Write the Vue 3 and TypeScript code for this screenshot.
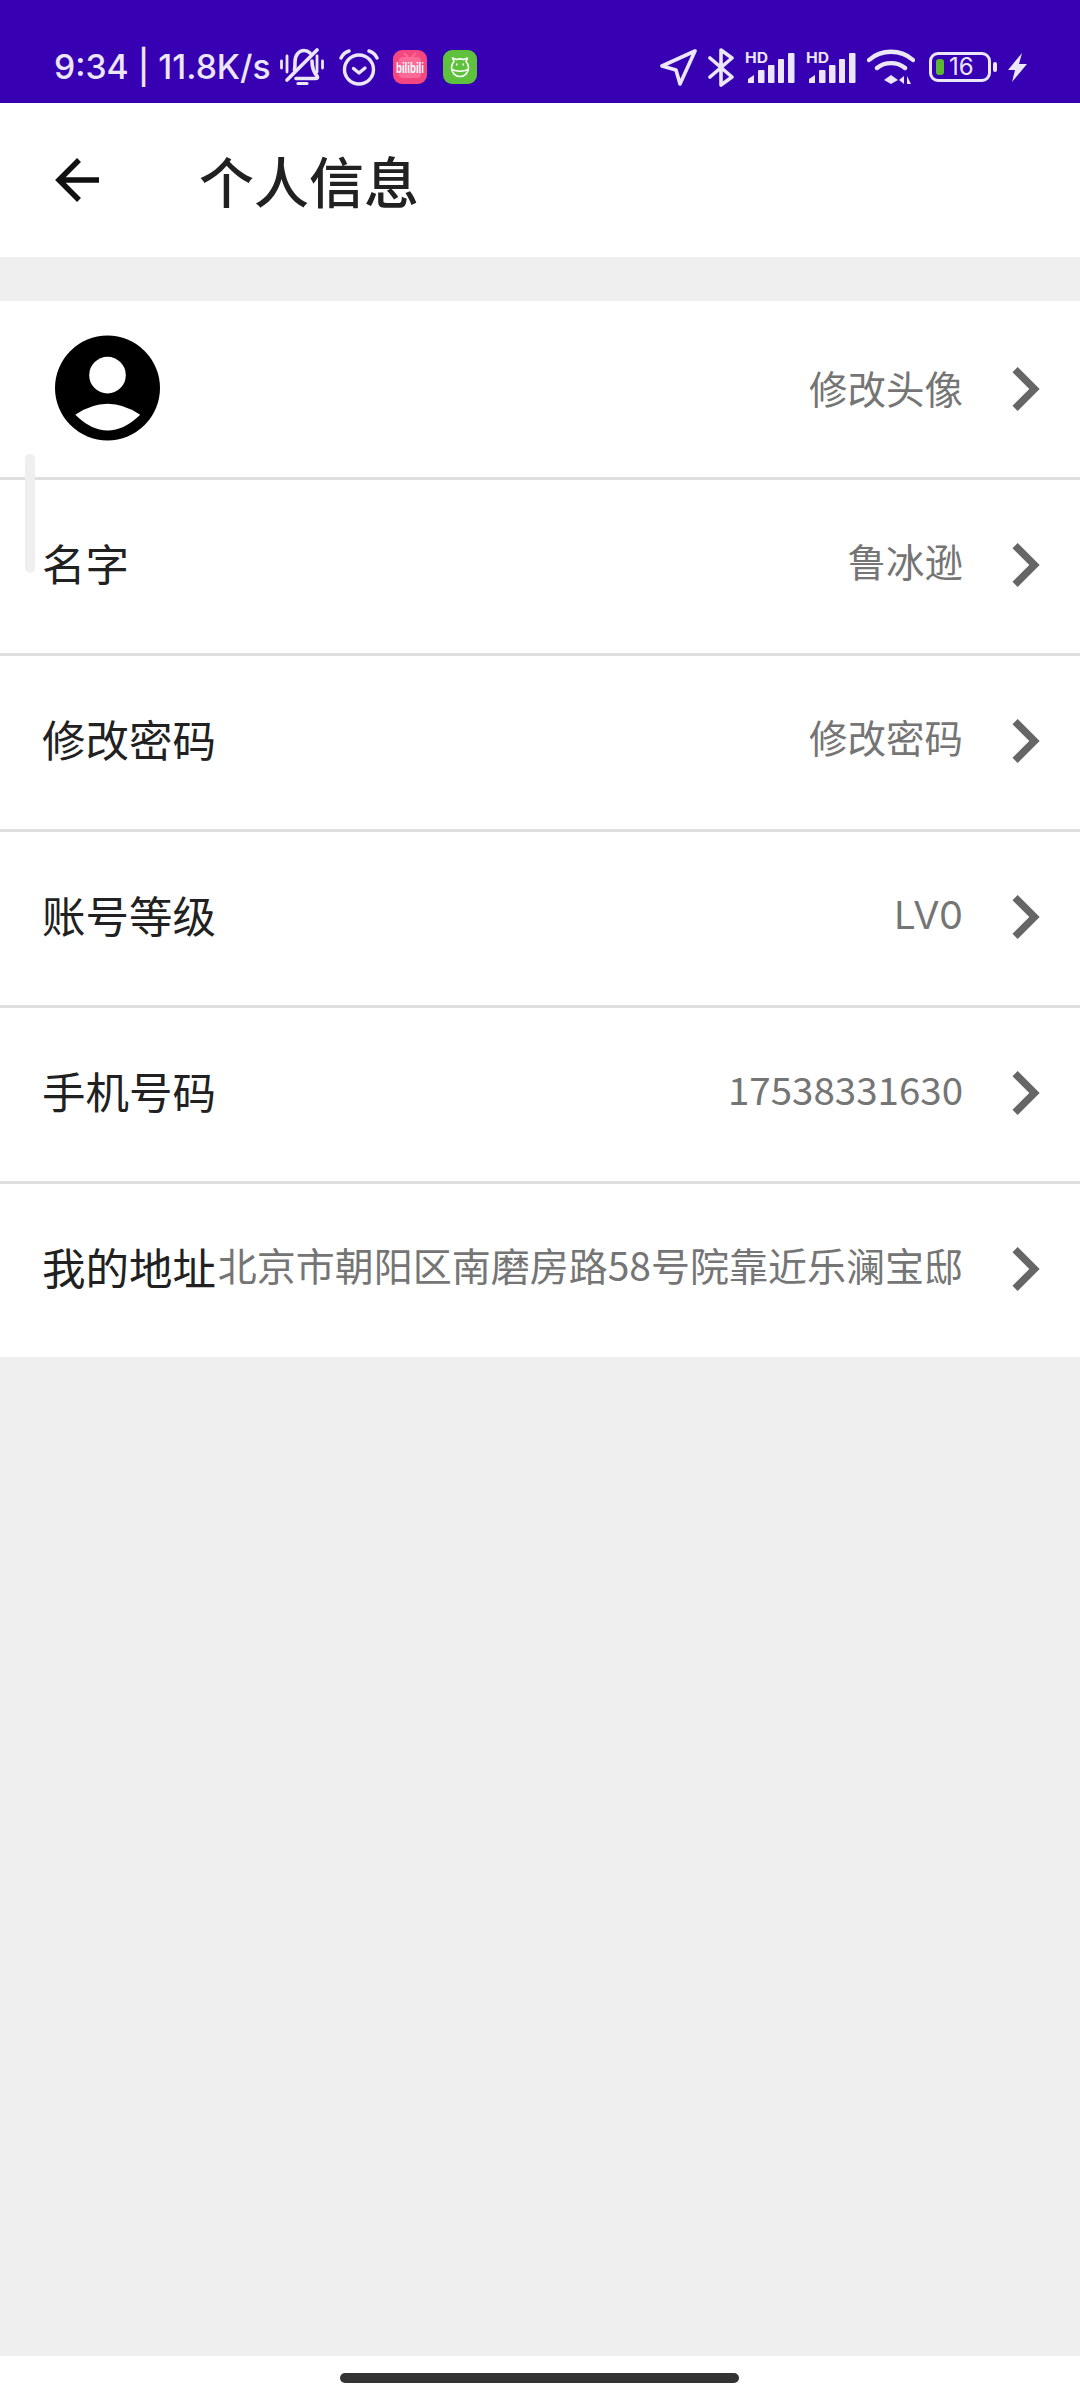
<script setup lang="ts">
interface Row {
  label: string
  value: string
  latin?: boolean
}

const rows: Row[] = [
  { label: '名字', value: '鲁冰逊' },
  { label: '修改密码', value: '修改密码' },
  { label: '账号等级', value: 'LV0', latin: true },
  { label: '手机号码', value: '17538331630' },
  { label: '我的地址', value: '北京市朝阳区南磨房路58号院靠近乐澜宝邸' },
]
const bars = [0, 1]
</script>

<template>
  <main class="page">
    <header class="status">
      <div class="status-left">
        <span class="clock">9:34 | 11.8K/s</span>
        <svg class="ic bell" width="44" height="38" viewBox="0 0 44 38" fill="none" stroke="#ebe6f8" stroke-width="3.6" stroke-linecap="round" stroke-linejoin="round">
          <path d="M1.500 13v7M7 8v16M37 8v16M42.500 13v7" stroke-width="2.800" />
          <path d="M14.500 22c.5-3 .5-5 .5-8 0-7 4-11.500 9-11.500 2.500 0 4.500 1 6 2.500M32 13c0 6 1.500 11 5 15 1 1.500.5 2.500-1 2.500H16" />
          <path d="M7 32 37 2" />
          <path d="M18 35.500h9" stroke-width="3.200" />
        </svg>
        <svg class="ic alarm" width="40" height="37" viewBox="0 0 40 37" fill="none" stroke="#ebe6f8" stroke-width="3.400" stroke-linecap="round" stroke-linejoin="round">
          <circle cx="20" cy="20.500" r="14.500" />
          <path d="M14.500 19.500l5.500 4.500 6-5" />
          <path d="M2 9C3.500 5.500 6.500 3 10 2M38 9C36.500 5.500 33.500 3 30 2" />
        </svg>
        <svg class="ic app" width="34" height="34" viewBox="0 0 34 34">
          <rect width="34" height="34" rx="9" fill="#f5477f" />
          <rect x="6" y="7" width="22" height="21" rx="4" fill="#fb6b97" />
          <path d="M11 3l4 4M23 3l-4 4" stroke="#fb6b97" stroke-width="2" />
          <text x="17" y="23" class="bili" text-anchor="middle" textLength="28" lengthAdjust="spacingAndGlyphs">bilibili</text>
        </svg>
        <svg class="ic" width="34" height="34" viewBox="0 0 34 34" fill="none">
          <rect width="34" height="34" rx="9" fill="#5ec23c" />
          <path d="M11 11.500 9.500 8l4 1.500c2.300-.8 4.700-.8 7 0l4-1.500-1.500 3.500c1.500 1.500 2.500 3.500 2.500 6 0 5.500-4 9-8.500 9s-8.500-3.500-8.500-9c0-2.500 1-4.500 2.500-6zM8.500 19.500c5 2 12 2 17 0" stroke="#fff" stroke-width="1.600" stroke-linejoin="round" />
          <path d="M13 14.500h1.500M19.500 14.500H21" stroke="#fff" stroke-width="2" />
        </svg>
      </div>
      <div class="status-right">
        <svg class="ic" width="37" height="37" viewBox="0 0 37 37" fill="none" stroke="#ebe6f8" stroke-width="3.600" stroke-linejoin="round">
          <path d="M35 2 2 17l14 4 4 14z" />
        </svg>
        <svg class="ic" width="26" height="39" viewBox="0 0 26 39" fill="none" stroke="#ebe6f8" stroke-width="3.600" stroke-linecap="round" stroke-linejoin="round">
          <path d="M2 10l22 19-11 8V2l11 8L2 29" />
        </svg>
        <svg v-for="b in bars" :key="b" class="ic signal" width="50" height="38" viewBox="0 -6 50 38">
          <text x="0" y="12" class="hd" textLength="23" lengthAdjust="spacingAndGlyphs">HD</text>
          <g fill="#ebe6f8">
            <path d="M3 32v-4l6-4v8z" />
            <rect x="13" y="19" width="6.500" height="13" rx="1" />
            <rect x="23" y="14" width="6.500" height="18" rx="1" />
            <rect x="33" y="8" width="6" height="24" rx="1" />
            <rect x="43" y="2" width="6.500" height="30" rx="1" />
          </g>
        </svg>
        <svg class="ic" width="48" height="36" viewBox="0 0 48 36" fill="none" stroke="#ebe6f8" stroke-width="4.400" stroke-linecap="round">
          <path d="M2 11c12-11 32-11 44 0M10 19c8-6.500 20-6.500 28 0" />
          <path d="M17 31l7-5 7 5-7 4z" fill="#ebe6f8" stroke="none" />
          <path d="M37 27v8l-5-4zM40 27v8h4" fill="#ebe6f8" stroke="none" />
        </svg>
        <div class="battery">
          <div class="battery-body">
            <i class="level"></i>
            <span class="pct">16</span>
          </div>
          <i class="nub"></i>
        </div>
        <svg class="ic" width="19" height="29" viewBox="0 0 19 29">
          <path d="M14 0 0 17h7l-3 12 15-18h-8z" fill="#ebe6f8" />
        </svg>
      </div>
    </header>

    <nav class="toolbar">
      <svg class="back" width="44" height="44" viewBox="0 0 44 44" fill="none" stroke="#111" stroke-width="5.500">
        <path d="M44 22H4M24 2 4 22l20 20" />
      </svg>
      <h1 class="title">个人信息</h1>
    </nav>

    <section class="list">
      <div class="row avatar-row">
        <svg class="avatar" width="105" height="106" viewBox="0 0 106 106">
          <circle cx="53" cy="53" r="53" fill="#000" />
          <circle cx="53" cy="40" r="18.500" fill="#fff" />
          <path d="M20.500 80Q53 58 86 80 53 112 20.500 80z" fill="#fff" />
        </svg>
        <span class="value">修改头像</span>
        <svg class="chevron" width="88" height="88" viewBox="0 0 24 24">
          <path d="M10 6 8.590 7.410 13.170 12l-4.580 4.590L10 18l6-6z" fill="#666" />
        </svg>
      </div>
      <div v-for="row in rows" :key="row.label" class="row">
        <span class="label">{{ row.label }}</span>
        <span class="value" :class="{ latin: row.latin }">{{ row.value }}</span>
        <svg class="chevron" width="88" height="88" viewBox="0 0 24 24">
          <path d="M10 6 8.590 7.410 13.170 12l-4.580 4.590L10 18l6-6z" fill="#666" />
        </svg>
      </div>
      <i class="scrollbar"></i>
    </section>

    <div class="filler"></div>

    <footer class="gesture">
      <i class="pill"></i>
    </footer>
  </main>
</template>

<style scoped>
.page {
  width: 1080px;
  height: 2400px;
  display: flex;
  flex-direction: column;
  background-color: #efefef;
  font-family: "Noto Sans CJK SC", sans-serif;
}

.status {
  height: 103px;
  flex: none;
  display: flex;
  justify-content: space-between;
  align-items: flex-start;
  box-sizing: border-box;
  padding: 47px 53px 0 54px;
  background-color: #3700b3;
  color: #ebe6f8;
}

.status-left,
.status-right {
  display: flex;
  align-items: center;
  height: 40px;
}

.clock {
  flex: none;
  font-family: Inter, sans-serif;
  font-size: 33.7px;
  font-weight: 500;
  line-height: 40px;
  white-space: nowrap;
  margin-right: 9px;
}

.ic {
  display: block;
  flex: none;
}

.signal {
  margin-top: -6px;
}

.bell {
  margin-right: 15px;
}

.alarm {
  margin-right: 14px;
}

.app {
  margin-right: 16px;
}

.status-right {
  gap: 11px;
}

.hd {
  font-family: Inter, sans-serif;
  font-size: 14px;
  font-weight: 700;
  fill: #ebe6f8;
}

.bili {
  font-family: "Liberation Sans", sans-serif;
  font-size: 15px;
  font-weight: 700;
  fill: #fff;
}

.battery {
  display: flex;
  align-items: center;
  gap: 2px;
  margin-left: 3px;
}

.battery-body {
  width: 62px;
  height: 30px;
  box-sizing: border-box;
  border: 3px solid #ebe6f8;
  border-radius: 9px;
  display: flex;
  align-items: center;
  padding-left: 4px;
}

.level {
  flex: none;
  width: 8px;
  height: 16px;
  border-radius: 3px;
  background-color: #5cb82e;
}

.pct {
  font-family: Inter, sans-serif;
  font-size: 24px;
  line-height: 24px;
  margin-left: 5px;
}

.nub {
  width: 4px;
  height: 10px;
  border-radius: 2px;
  background-color: #ebe6f8;
}

.toolbar {
  height: 154px;
  flex: none;
  display: flex;
  align-items: center;
  padding-left: 55px;
  margin-bottom: 44px;
  background-color: #fff;
}

.back {
  flex: none;
}

.title {
  margin: 0 0 2px 100px;
  font-size: 55px;
  font-weight: 500;
  color: #212121;
}

.list {
  position: relative;
  flex: none;
  background-color: #fff;
}

.row {
  height: 176px;
  box-sizing: border-box;
  display: flex;
  align-items: center;
  padding: 0 11px 3px 42px;
  border-bottom: 3px solid #e0e0e0;
}

.row:last-of-type {
  height: 173px;
  border-bottom: none;
}

.avatar-row {
  height: 179px;
  padding-bottom: 2px;
  padding-left: 55px;
}

.avatar-row .chevron {
  margin-top: 2px;
}

.label {
  flex: none;
  font-size: 43.5px;
  line-height: 52px;
  margin-bottom: 4px;
  color: #212121;
  white-space: nowrap;
}

.value {
  flex: 1;
  min-width: 0;
  text-align: right;
  font-size: 38.5px;
  line-height: 46px;
  margin-bottom: 10px;
  color: #757575;
  white-space: nowrap;
}

.value.latin {
  font-family: Inter, sans-serif;
  font-size: 38px;
  margin-bottom: 5px;
}

.avatar-row .value {
  margin-bottom: 2px;
}

.row:last-of-type .value {
  font-size: 39px;
}

.chevron {
  flex: none;
  margin-left: 18px;
}

.scrollbar {
  position: absolute;
  left: 25px;
  top: 153px;
  width: 10px;
  height: 119px;
  border-radius: 5px;
  background-color: #efefef;
}

.filler {
  flex: 1;
}

.gesture {
  height: 44px;
  flex: none;
  display: flex;
  justify-content: center;
  padding: 17px 1px 0 0;
  box-sizing: border-box;
  background-color: #fff;
}

.pill {
  width: 399px;
  height: 10px;
  border-radius: 5px;
  background-color: #333;
}
</style>
